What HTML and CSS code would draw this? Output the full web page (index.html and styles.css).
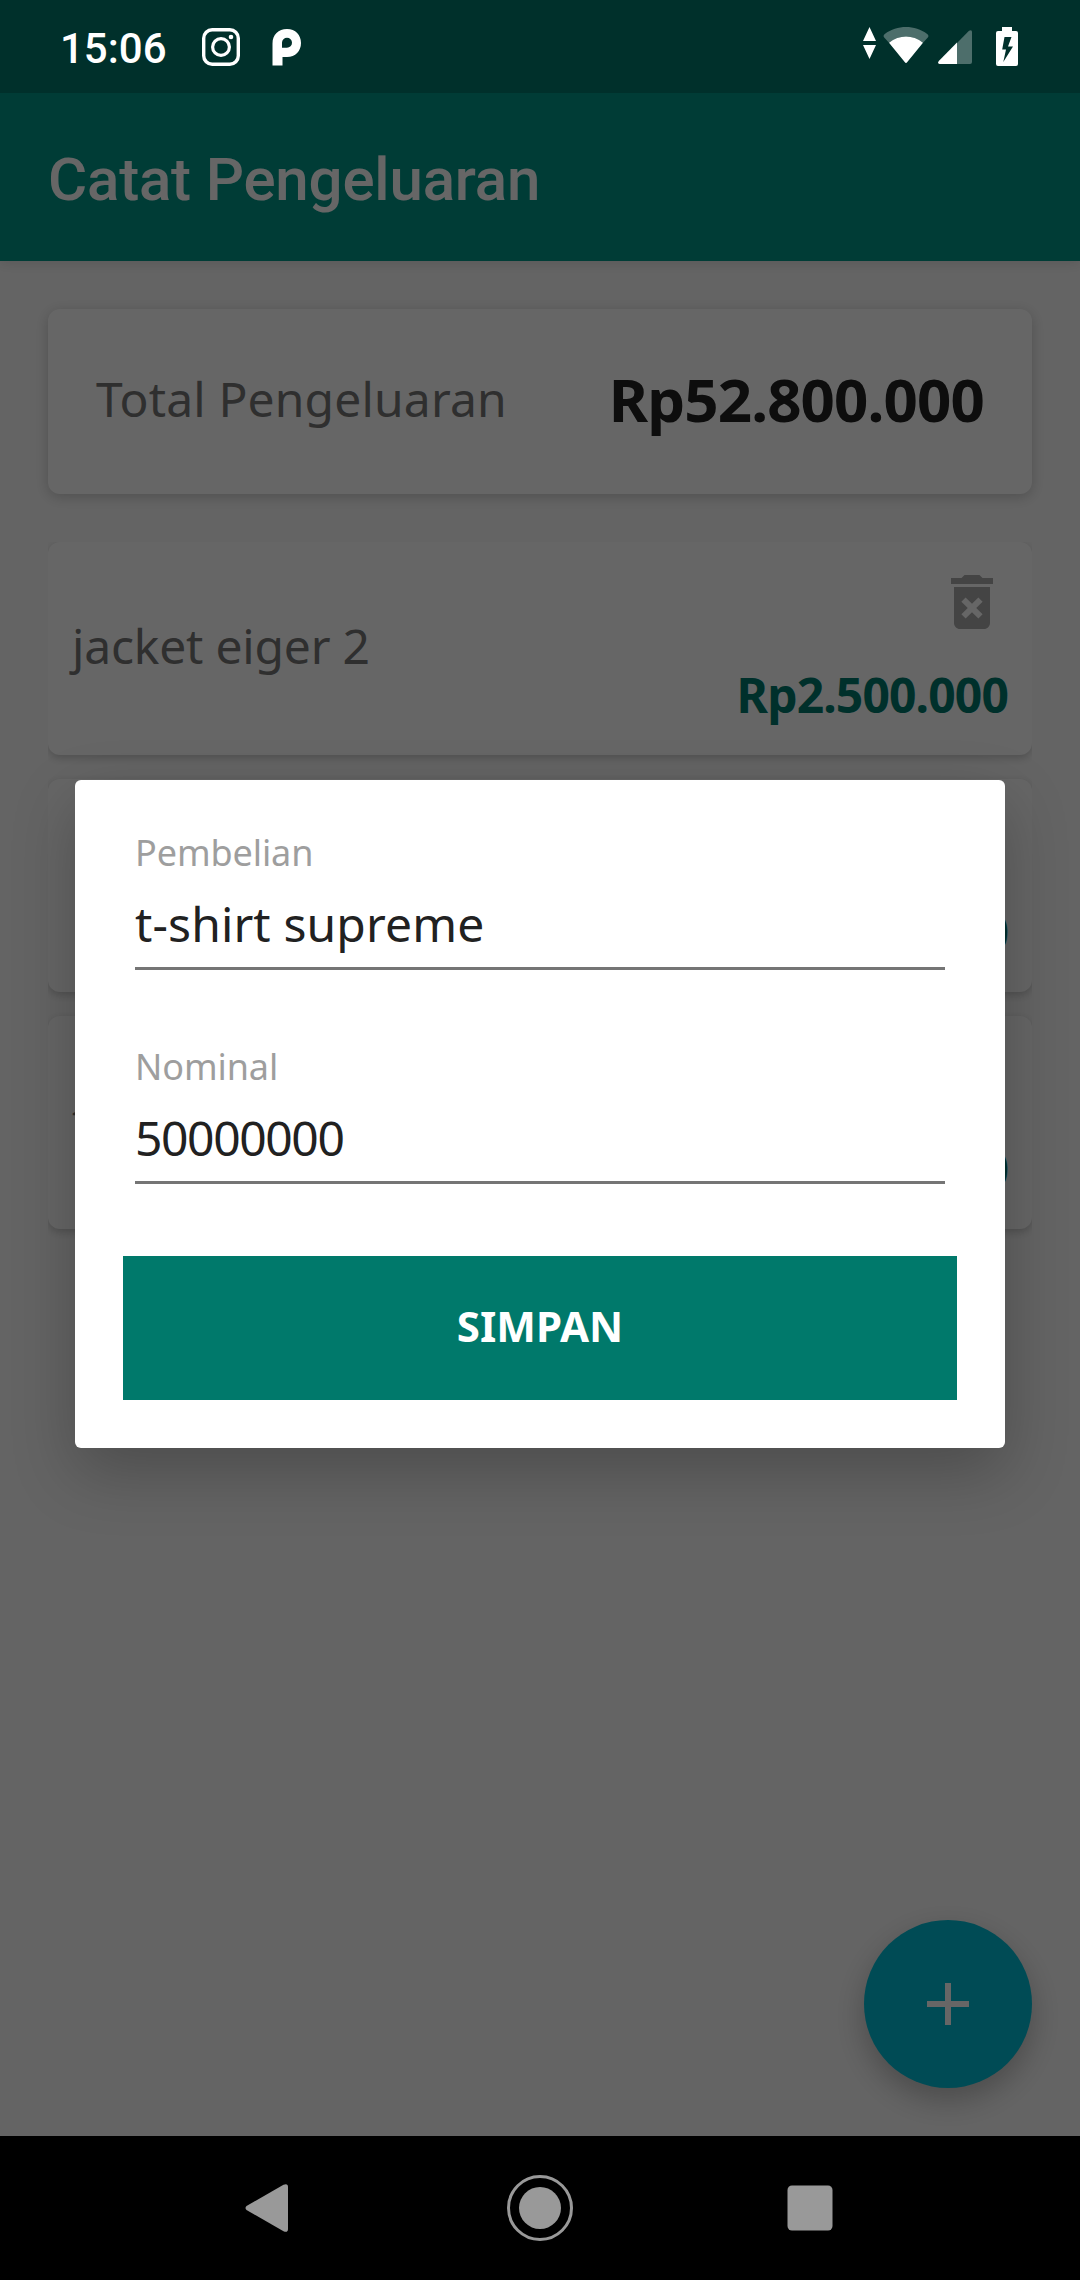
FILE: index.html
```html
<!DOCTYPE html>
<html lang="id">
<head>
<meta charset="utf-8">
<title>Catat Pengeluaran</title>
<link rel="stylesheet" href="styles.css">
</head>
<body>
<div class="phone">
  <header class="status-bar">
    <div class="status-left">
      <span class="clock">15:06</span>
      <svg class="ic-instagram" width="38" height="38" viewBox="0 0 38 38" fill="none" stroke="#fff">
        <rect x="1.7" y="1.7" width="34.6" height="34.6" rx="8.5" stroke-width="3.4"/>
        <circle cx="19" cy="19" r="8.4" stroke-width="3.2"/>
        <circle cx="29" cy="9" r="2.3" fill="#fff" stroke="none"/>
      </svg>
      <svg class="ic-p" width="30" height="38" viewBox="0 0 30 38" fill="#fff" fill-rule="evenodd">
        <path d="M.5 37.500V15.500C.5 6.500 6.500 1 15 1c8.500 0 14 6 14 14s-5.500 14-14 14h-4.500v8.500zM10 19.800h5a5 5 0 1 0-5-5z"/>
      </svg>
    </div>
    <div class="status-right">
      <svg class="ic-data" width="13" height="32" viewBox="0 0 13 32" fill="#fff">
        <path d="M6.500 0 13 14H0zM6.500 32 13 18H0z"/>
      </svg>
      <svg class="ic-wifi" width="46" height="37" viewBox="0 0 46 37" fill="#fff">
        <path opacity=".3" d="M1.200 10.500Q-.3 8.500 1.800 7C14-2.300 32-2.300 44.200 7q2.100 1.500.6 3.500L40 15.700C30 7.500 16 7.500 6 15.700z"/>
        <path d="M6 15.700C16 7.500 30 7.500 40 15.700L24.300 35Q23 36.800 21.700 35z"/>
      </svg>
      <svg class="ic-signal" width="34" height="34" viewBox="0 0 34 34" fill="#fff">
        <path opacity=".3" d="M19 13 31 .8Q34-1 34 2v30q0 2-2 2H19z"/>
        <path d="M19 12.500V34H1.500Q-1 33.500.8 31z"/>
      </svg>
      <svg class="ic-battery" width="22" height="39" viewBox="0 0 22 39" fill="#fff" fill-rule="evenodd">
        <path d="M6 0h10v4h4q2 0 2 2v31q0 2-2 2H2q-2 0-2-2V6q0-2 2-2h4zM8.500 10 6.200 22.500H10L7.300 35 17 19.500H12L15.500 10z"/>
      </svg>
    </div>
  </header>

  <div class="app">
    <div class="app-bar"><h1 class="title">Catat Pengeluaran</h1></div>
    <main class="content">
      <section class="total-card">
        <span class="total-label">Total Pengeluaran</span>
        <span class="total-value">Rp52.800.000</span>
      </section>
      <ul class="list">
        <li class="item">
          <span class="item-name">jacket eiger 2</span>
          <div class="item-side">
            <svg class="ic-delete" width="72" height="72" viewBox="0 0 24 24"><path d="M6 19c0 1.100.9 2 2 2h8c1.100 0 2-.9 2-2V7H6v12zm2.460-7.120l1.410-1.410L12 12.590l2.120-2.120 1.410 1.410L13.410 14l2.120 2.120-1.410 1.410L12 15.410l-2.120 2.120-1.410-1.410L10.590 14l-2.130-2.120zM15.500 4l-1-1h-5l-1 1H5v2h14V4z"/></svg>
            <span class="item-amount">Rp2.500.000</span>
          </div>
        </li>
        <li class="item">
          <span class="item-name"></span>
          <div class="item-side item-side-end"><span class="item-amount">Rp300.000</span></div>
        </li>
        <li class="item">
          <span class="item-name">t</span>
          <div class="item-side item-side-end"><span class="item-amount">Rp50.000.000</span></div>
        </li>
      </ul>
    </main>
    <button class="fab" aria-label="Tambah">
      <svg width="42" height="42" viewBox="0 0 42 42" fill="#fff"><path d="M18 0h6v18h18v6H24v18h-6V24H0v-6h18z"/></svg>
    </button>
    <div class="scrim"></div>
    <form class="dialog">
      <label class="field">
        <span class="field-label">Pembelian</span>
        <span class="field-value">t-shirt supreme</span>
      </label>
      <label class="field">
        <span class="field-label">Nominal</span>
        <span class="field-value digits">50000000</span>
      </label>
      <button class="save" type="button">SIMPAN</button>
    </form>
  </div>

  <nav class="nav-bar">
    <svg width="44" height="50" viewBox="0 0 44 50" fill="#999"><path d="M1.500 23 38.500 1.700Q43 0 43 4v42q0 4-4.500 2.300L1.500 27q-2-2 0-4z"/></svg>
    <svg class="nav-home" width="66" height="66" viewBox="0 0 66 66"><circle cx="33" cy="33" r="31.500" fill="none" stroke="#999" stroke-width="3"/><circle cx="33" cy="33" r="21" fill="#999"/></svg>
    <svg width="46" height="46" viewBox="0 0 46 46" fill="#999"><rect x=".5" y=".5" width="45" height="45" rx="4.500"/></svg>
  </nav>
</div>
</body>
</html>
```

FILE: styles.css
```css
* { box-sizing: border-box; }
body { margin: 0; font-family: "Noto Sans", sans-serif; background: #000; }
svg { display: block; flex: none; }
button { border: 0; padding: 0; font-family: inherit; }

.phone { width: 1080px; height: 2280px; display: flex; flex-direction: column; overflow: hidden; }

/* System status bar */
.status-bar { height: 93px; flex: none; display: flex; justify-content: space-between; background: #00302b; position: relative; z-index: 2; }
.status-left { display: flex; padding: 28px 0 0 60px; }
.clock { width: 142px; font: 500 42px/42px Roboto, sans-serif; color: #fff; }
.ic-p { margin-left: 32px; }
.status-right { display: flex; padding: 27px 62px 0 0; }
.ic-wifi { margin-left: 7px; }
.ic-signal { margin: 3px 0 0 9px; }
.ic-battery { margin-left: 24px; }

/* Application area */
.app { flex: 1; min-height: 0; display: flex; flex-direction: column; background: #fafafa; position: relative; }
.app-bar { height: 168px; flex: none; display: flex; align-items: center; padding: 6px 48px 0; background: #009688; box-shadow: 0 2px 12px rgba(0,0,0,.12); }
.title { margin: 0; font: 500 60px/72px Roboto, sans-serif; letter-spacing: -.18px; color: #fff; }
.content { padding: 48px; display: flex; flex-direction: column; gap: 48px; }

.total-card { height: 185px; padding: 0 48px 6px; display: flex; align-items: center; justify-content: space-between; background: #fff; border-radius: 12px; box-shadow: 0 3px 14px rgba(0,0,0,.2); }
.total-label { font-size: 48px; letter-spacing: .15px; color: #757575; }
.total-value { font-size: 60px; font-weight: 700; letter-spacing: -.85px; color: #212121; }

/* Expense list, clips the card shadows at its own edges */
.list { list-style: none; margin: 0; padding: 0 0 24px; display: flex; flex-direction: column; gap: 24px; overflow: hidden; }
.item { height: 213px; flex: none; padding: 24px; display: flex; align-items: center; justify-content: space-between; background: #fff; border-radius: 12px; box-shadow: 0 3px 9px rgba(0,0,0,.2); }
.item-name { font-size: 48px; line-height: 64px; padding-bottom: 6px; letter-spacing: -.2px; color: #757575; }
.item-side { height: 165px; display: flex; flex-direction: column; align-items: flex-end; gap: 25px; }
.item-side-end { padding-top: 97px; }
.ic-delete { fill: #aaa; }
.item-amount { font-size: 48px; line-height: 64px; font-weight: 700; letter-spacing: -.87px; color: #00796b; }

.fab { position: absolute; right: 48px; bottom: 48px; width: 168px; height: 168px; border-radius: 50%; background: #00bcd4; display: flex; align-items: center; justify-content: center; box-shadow: 0 12px 30px rgba(0,0,0,.25); }
.scrim { position: absolute; inset: 0; background: rgba(0,0,0,.6); }

/* Entry dialog */
.dialog { position: absolute; left: 75px; top: 687px; width: 930px; height: 668px; padding: 51px 48px 48px; background: #fff; border-radius: 6px; box-shadow: 0 24px 64px rgba(0,0,0,.24); display: flex; flex-direction: column; }
.field { display: flex; flex-direction: column; height: 139px; margin: 0 12px 75px; border-bottom: 3px solid #757575; }
.field-label { font-size: 36px; line-height: 44px; letter-spacing: -.1px; color: #9e9e9e; }
.field-value { font-size: 48px; line-height: 64px; margin-top: 17px; letter-spacing: .12px; color: #212121; }
.digits { letter-spacing: -1.4px; }
.save { height: 144px; margin-top: -3px; padding-bottom: 6px; flex: none; background: #00796b; color: #fff; font-size: 42px; font-weight: 700; }

/* System navigation */
.nav-bar { height: 144px; flex: none; display: flex; align-items: center; justify-content: space-between; padding: 0 247px 0 245px; background: #000; position: relative; z-index: 2; }
.nav-home { margin-left: 4px; }
```
